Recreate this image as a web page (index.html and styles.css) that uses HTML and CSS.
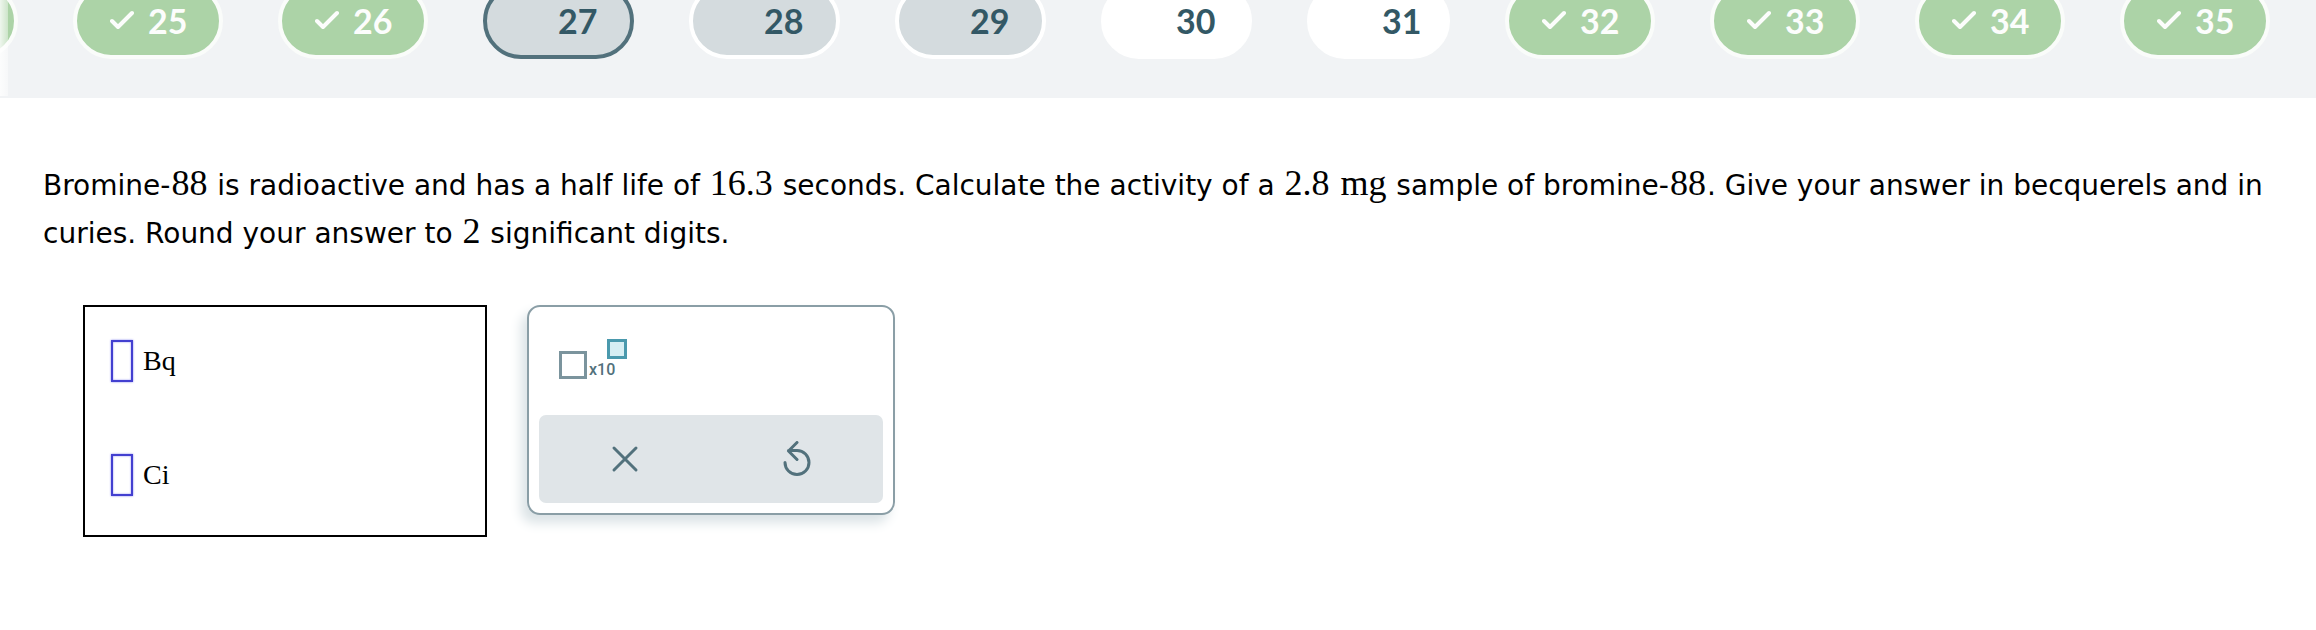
FILE: index.html
```
<!DOCTYPE html>
<html lang="en">
<head>
    <meta charset="UTF-8">
    <meta name="viewport" content="width=device-width, initial-scale=1.0">
    <title>Bromine-88 activity</title>
    <link rel="stylesheet" href="styles.css">
</head>
<body>
    <nav class="question-nav">
        <div class="pills">
            <button class="pill done" aria-label="24"></button>
            <button class="pill done"><svg class="check" viewBox="0 0 24 20"><path d="M2 11l6 6L22 3"/></svg>25</button>
            <button class="pill done"><svg class="check" viewBox="0 0 24 20"><path d="M2 11l6 6L22 3"/></svg>26</button>
            <button class="pill seen current">27</button>
            <button class="pill seen">28</button>
            <button class="pill seen">29</button>
            <button class="pill">30</button>
            <button class="pill narrow">31</button>
            <button class="pill done"><svg class="check" viewBox="0 0 24 20"><path d="M2 11l6 6L22 3"/></svg>32</button>
            <button class="pill done"><svg class="check" viewBox="0 0 24 20"><path d="M2 11l6 6L22 3"/></svg>33</button>
            <button class="pill done"><svg class="check" viewBox="0 0 24 20"><path d="M2 11l6 6L22 3"/></svg>34</button>
            <button class="pill done"><svg class="check" viewBox="0 0 24 20"><path d="M2 11l6 6L22 3"/></svg>35</button>
        </div>
    </nav>

    <main class="content">
        <p class="question">Bromine-<span class="math">88</span> is radioactive and has a half life of <span class="math">16.3</span> seconds. Calculate the activity of a <span class="math">2.8</span> <span class="math">mg</span> sample of bromine-<span class="math">88</span>. Give your answer in becquerels and in curies. Round your answer to <span class="math">2</span> significant digits.</p>

        <div class="work">
            <form class="answers">
                <div class="answer">
                    <input type="text" id="bq" class="answer-input">
                    <label for="bq">Bq</label>
                </div>
                <div class="answer">
                    <input type="text" id="ci" class="answer-input">
                    <label for="ci">Ci</label>
                </div>
            </form>

            <div class="palette">
                <button class="tool" aria-label="Scientific notation">
                    <svg width="72" height="42" viewBox="0 0 72 42">
                        <rect class="base-box" x="1.5" y="13.5" width="25" height="25"/>
                        <text class="times-ten" x="30" y="36">x10</text>
                        <rect class="exp-box" x="49.5" y="1.5" width="17" height="17"/>
                    </svg>
                </button>
                <div class="actions">
                    <button class="action" aria-label="Clear">
                        <svg class="icon" viewBox="0 0 36 36"><path d="M7 7l22 22M29 7L7 29"/></svg>
                    </button>
                    <button class="action" aria-label="Reset">
                        <svg class="icon" viewBox="0 0 36 36"><path d="M6 21.500a12 12 0 1 0 12-12H9.500M18 1.500L9.500 10l8.500 8.500"/></svg>
                    </button>
                </div>
            </div>
        </div>
    </main>
</body>
</html>
```
FILE: styles.css
```
* {
    box-sizing: border-box;
}

body {
    margin: 0;
    background: #fff;
    color: #000;
    font-family: "DejaVu Sans", Verdana, sans-serif;
}

button {
    font: inherit;
    cursor: pointer;
}

.question-nav {
    position: relative;
    height: 98px;
    overflow: hidden;
    background: #f1f3f5;
}

.question-nav::before {
    content: "";
    position: absolute;
    top: 0;
    left: 0;
    width: 8px;
    height: 96px;
    background: linear-gradient(to right, rgba(255, 255, 255, 0.8), rgba(255, 255, 255, 0.4));
    z-index: 1;
}

.pills {
    display: flex;
    gap: 55px;
    margin: -17px 0 0 -132px;
}

.pill {
    display: flex;
    flex: none;
    align-items: center;
    width: 151px;
    height: 76px;
    padding: 0 0 2px 71px;
    border: 4px solid #fff;
    border-radius: 38px;
    background: #fff;
    color: #335865;
    font-family: Lato, sans-serif;
    font-size: 34px;
    font-weight: bold;
}

.pill.narrow {
    width: 143px;
}

.pill.seen {
    background: #d4dbde;
}

.pill.current {
    border-color: #52717c;
}

.pill.done {
    width: 150px;
    padding-left: 33px;
    border-color: #fafcfa;
    background: #acd3a7;
    color: #fcfdfc;
}

.check {
    width: 24px;
    height: 20px;
    margin-right: 14px;
    fill: none;
    stroke: #fcfdfc;
    stroke-width: 4;
    stroke-linecap: round;
    stroke-linejoin: round;
}

.content {
    padding: 64px 40px 40px 43px;
}

.question {
    margin: 0;
    font-size: 28px;
    line-height: 48px;
}

.math {
    margin: 0 1px;
    font-family: "Liberation Serif", "Times New Roman", serif;
    font-size: 36px;
    line-height: 1;
}

.work {
    display: flex;
    align-items: flex-start;
    gap: 40px;
    margin: 47px 0 0 40px;
}

.answers {
    display: flex;
    flex-direction: column;
    gap: 72px;
    width: 404px;
    padding: 33px 26px 39px;
    border: 2px solid #000;
}

.answer {
    display: flex;
    align-items: center;
    gap: 10px;
    font-family: "Liberation Serif", "Times New Roman", serif;
    font-size: 28px;
}

.answer-input {
    width: 22px;
    height: 42px;
    padding: 0;
    border: 2px solid #4340d0;
    background: #fff;
    box-shadow: 0 0 2px #8a88f0, inset 0 0 2px #8a88f0;
    font: inherit;
}

.palette {
    width: 368px;
    padding: 32px 10px 10px;
    border: 2px solid #8a9ea6;
    border-radius: 13px;
    background: #fff;
    box-shadow: -6px 8px 12px #dbe3e6;
}

.tool {
    display: block;
    margin: 0 0 34px 20px;
    padding: 0;
    border: 0;
    background: none;
}

.tool svg {
    display: block;
}

.base-box {
    fill: #fff;
    stroke: #7b949d;
    stroke-width: 3;
}

.exp-box {
    fill: #d6eef3;
    stroke: #4a99ad;
    stroke-width: 3;
}

.times-ten {
    fill: #52717c;
    font-family: Roboto, sans-serif;
    font-size: 16px;
    font-weight: 500;
}

.actions {
    display: flex;
    height: 88px;
    border-radius: 7px;
    background: #e0e5e8;
}

.action {
    display: flex;
    flex: 1;
    align-items: center;
    justify-content: center;
    padding: 0;
    border: 0;
    background: none;
}

.icon {
    width: 36px;
    height: 36px;
    fill: none;
    stroke: #52717c;
    stroke-width: 3;
    stroke-linecap: round;
    stroke-linejoin: round;
}
```
